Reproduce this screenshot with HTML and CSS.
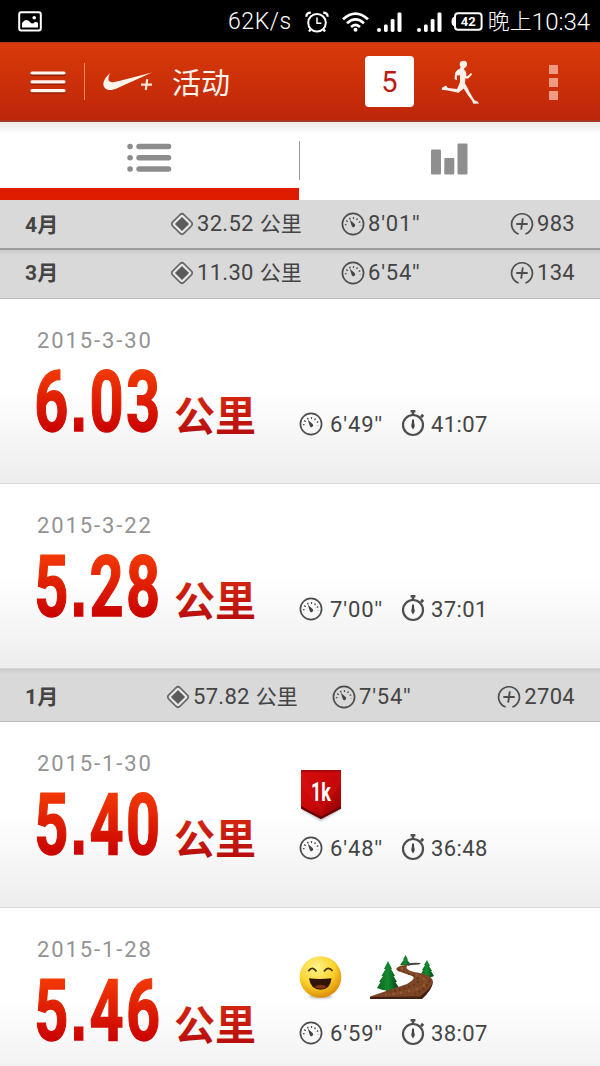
FILE: index.html
```html
<!DOCTYPE html>
<html lang="zh-CN">
<head>
    <meta charset="UTF-8">
    <meta name="viewport" content="width=device-width, initial-scale=1.0">
    <title>活动</title>
    <link rel="stylesheet" href="styles.css">
</head>
<body>
    <!-- shared icons -->
    <svg class="defs" width="0" height="0">
        <defs>
            <linearGradient id="redText" x1="0" y1="10" x2="0" y2="76" gradientUnits="userSpaceOnUse">
                <stop offset="0" stop-color="#f33b05"/>
                <stop offset="1" stop-color="#c90000"/>
            </linearGradient>
            <linearGradient id="redUnit" x1="0" y1="38" x2="0" y2="76" gradientUnits="userSpaceOnUse">
                <stop offset="0" stop-color="#d42610"/>
                <stop offset="1" stop-color="#b80d0d"/>
            </linearGradient>
        </defs>
        <symbol id="distance" viewBox="0 0 24 24">
            <rect x="4" y="4" width="16" height="16" rx="3" fill="#e8e8e8" stroke="#696969" stroke-width="1.7" transform="rotate(45 12 12)"/>
            <rect x="7" y="7" width="10" height="10" fill="#5b5b5b" transform="rotate(45 12 12)"/>
        </symbol>
        <symbol id="pace" viewBox="0 0 24 24">
            <circle cx="12" cy="12" r="10.6" fill="none" stroke="#4d4d4d" stroke-width="1.7"/>
            <path d="M4.7 13.3A7.3 7.3 0 1 1 19.3 13.3" fill="none" stroke="#4d4d4d" stroke-width="1.8" stroke-dasharray="1.3 2.45"/>
            <path d="M8.8 7.8L13.6 12A1.8 1.8 0 1 1 10.6 13.6Z" fill="#444"/>
        </symbol>
        <symbol id="fuel" viewBox="0 0 24 24">
            <path d="M8.6 22A10.4 10.4 0 1 1 15.4 22" fill="none" stroke="#4d4d4d" stroke-width="1.7"/>
            <path d="M12.8 6.3L11.2 17.7M6.3 12H17.7" fill="none" stroke="#4d4d4d" stroke-width="1.9"/>
        </symbol>
        <symbol id="time" viewBox="0 0 24 28">
            <circle cx="12" cy="16" r="10" fill="none" stroke="#4d4d4d" stroke-width="2.2"/>
            <path d="M9.6 1H14.4V3.6H13.2V6H10.8V3.6H9.6ZM19 7.3L21.1 4.8L23.2 6.8L21 9.3Z" fill="#4d4d4d"/>
            <path d="M11.1 10.5H12.9L13.3 15Q14.6 17 12 20.5Q9.4 17 10.7 15Z" fill="#444"/>
        </symbol>
        <symbol id="signal" viewBox="0 0 25 20">
            <circle cx="2" cy="18" r="2"/>
            <rect x="7" y="12.5" width="3.7" height="7.5" rx="1.4"/>
            <rect x="13.7" y="7" width="3.8" height="13" rx="1.4"/>
            <rect x="20.5" y="0.5" width="4" height="19.5" rx="1.4"/>
        </symbol>
    </svg>

    <div class="status-bar">
        <svg class="picture" width="24" height="21" viewBox="0 0 24 21">
            <rect x="1.2" y="1.2" width="21.6" height="18.4" rx="2" fill="none" stroke="#fff" stroke-width="2"/>
            <path d="M4 16.5V12Q8 6.5 12 11Q14 14 17 11Q19 10.5 20 12V16.5Z" fill="#fff"/>
            <circle cx="16.2" cy="6.8" r="1.8" fill="#fff"/>
        </svg>
        <span class="speed">62K/s</span>
        <svg class="alarm" width="24" height="22" viewBox="0 0 24 22">
            <g fill="none" stroke="#fff">
                <circle cx="12" cy="11.8" r="8.8" stroke-width="2"/>
                <path d="M12 6.5V12.3H16.4" stroke-width="1.5"/>
                <path d="M1.3 5.7Q1.5 1.7 5.8 1.7M18.2 1.7Q22.5 1.7 22.7 5.7M5.5 18.5L4 20.5M18.5 18.5L20 20.5" stroke-width="2.2"/>
            </g>
        </svg>
        <svg class="wifi" width="27" height="20" viewBox="0 0 27 20">
            <g fill="none" stroke="#fff" stroke-width="2.7">
                <path d="M1 7.2Q13.5 -4 26 7.2"/>
                <path d="M5 11.3Q13.5 3.6 22 11.3"/>
                <path d="M9 15Q13.5 10.8 18 15"/>
            </g>
            <circle cx="13.5" cy="17.8" r="2" fill="#fff"/>
        </svg>
        <svg class="signal" width="25" height="20"><use href="#signal"/></svg>
        <svg class="signal second" width="25" height="20"><use href="#signal"/></svg>
        <svg class="battery" width="32" height="19" viewBox="0 0 32 19">
            <rect x="4" y="1.2" width="26.6" height="16.5" rx="3" fill="none" stroke="#fff" stroke-width="2"/>
            <path d="M4 4.5Q.5 5 .5 9.5Q.5 14 4 14.5Z" fill="#fff"/>
            <text x="17.2" y="14.2" text-anchor="middle" class="battery-level">42</text>
        </svg>
        <span class="clock">晚上<span class="digits">10:34</span></span>
    </div>

    <header class="header">
        <svg class="menu" width="36" height="24" viewBox="0 0 36 24">
            <path d="M2 3.3H34M2 12.2H34M2 21H34" stroke="#8d1d06" stroke-width="3.2" stroke-linecap="round"/>
            <path d="M2 2H34M2 10.9H34M2 19.7H34" stroke="#fff4ef" stroke-width="3.2" stroke-linecap="round"/>
        </svg>
        <span class="divider"></span>
        <svg class="logo" width="50" height="20" viewBox="0 0 50 20">
            <path d="M7.2 1C4 7 5 11.2 11.2 10.1Q14 9.6 17 8.7L49 .6L13.5 16.6C6 19.8 0 17.7 .4 11.3Q.7 6.8 7.2 1Z" fill="#fff4ec"/>
            <path d="M44.2 7.2L42.8 18M38 12.7H49" stroke="#ffe4d8" stroke-width="2.2"/>
        </svg>
        <h1 class="title">活动</h1>
        <span class="count">5</span>
        <svg class="runner" width="40" height="45" viewBox="0 0 40 45">
            <path d="M19.5 1.8Q23.5 -.5 25.5 2Q26.8 4.7 25 7Q23 8.6 22.7 9.2Q26.5 12 25 15.5L26 16.4L30 13L31.2 14.2L27 18.8L24.4 18.2L24 23.5Q26.4 27 28.5 32L33.4 40.3Q37 41 38.2 43.4L32.2 43.7Q31.5 41.5 31 40.5Q27 36 22.7 28.5L17.5 32.8L5.8 30.3L.8 30L1 27.8L5 25.4L6.8 28L16 29Q18 25 19 22L19 15.2L15.8 15.4L16 20.2L13.5 19L14.2 12.7Q16 9.4 19 8.6L19.6 6.5Q17.7 4.5 19.5 1.8Z" fill="#fff0e9"/>
        </svg>
        <span class="more"><i></i><i></i><i></i></span>
    </header>

    <nav class="tabs">
        <div class="tab active">
            <svg width="45" height="30" viewBox="0 0 45 30" stroke="#8d8d8d" stroke-width="5.5" stroke-linecap="round">
                <path d="M3 3.5H3.1M3 14.8H3.1M3 26H3.1M12 3.5H41.5M12 14.8H41.5M12 26H41.5"/>
            </svg>
        </div>
        <div class="tab">
            <svg width="37" height="32" viewBox="0 0 37 32" fill="#8f8f8f">
                <rect x="0" y="6.5" width="10" height="25" rx="1"/>
                <rect x="13.3" y="15" width="10" height="16.5" rx="1"/>
                <rect x="26.5" y="0.5" width="10" height="31" rx="1"/>
            </svg>
        </div>
    </nav>

    <main>
        <div class="month first">
            <span class="name">4月</span>
            <span class="stat"><svg class="icon"><use href="#distance"/></svg>32.52<span class="km">公里</span></span>
            <span class="stat time"><svg class="icon"><use href="#pace"/></svg>8'01''</span>
            <span class="stat"><svg class="icon"><use href="#fuel"/></svg>983</span>
        </div>
        <div class="month">
            <span class="name">3月</span>
            <span class="stat"><svg class="icon"><use href="#distance"/></svg>11.30<span class="km">公里</span></span>
            <span class="stat time"><svg class="icon"><use href="#pace"/></svg>6'54''</span>
            <span class="stat"><svg class="icon"><use href="#fuel"/></svg>134</span>
        </div>

        <div class="run">
            <div class="summary">
                <div class="date">2015-3-30</div>
                <svg class="distance" width="230" height="90">
                    <text class="number" transform="scale(.7 1)" x="-4 48 75 127" y="73">6<tspan class="dot">.</tspan>03</text>
                    <text class="unit" x="137" y="73">公里</text>
                </svg>
            </div>
            <div class="details">
                <div class="stats">
                    <svg class="icon"><use href="#pace"/></svg><span class="pace">6'49''</span>
                    <svg class="icon watch"><use href="#time"/></svg><span>41:07</span>
                </div>
            </div>
        </div>
        <div class="run">
            <div class="summary">
                <div class="date">2015-3-22</div>
                <svg class="distance" width="230" height="90">
                    <text class="number" transform="scale(.7 1)" x="-4 48 75 127" y="73">5<tspan class="dot">.</tspan>28</text>
                    <text class="unit" x="137" y="73">公里</text>
                </svg>
            </div>
            <div class="details">
                <div class="stats">
                    <svg class="icon"><use href="#pace"/></svg><span class="pace">7'00''</span>
                    <svg class="icon watch"><use href="#time"/></svg><span>37:01</span>
                </div>
            </div>
        </div>

        <div class="month wide">
            <span class="name">1月</span>
            <span class="stat"><svg class="icon"><use href="#distance"/></svg>57.82<span class="km">公里</span></span>
            <span class="stat time"><svg class="icon"><use href="#pace"/></svg>7'54''</span>
            <span class="stat"><svg class="icon"><use href="#fuel"/></svg>2704</span>
        </div>

        <div class="run">
            <div class="summary">
                <div class="date">2015-1-30</div>
                <svg class="distance" width="230" height="90">
                    <text class="number" transform="scale(.7 1)" x="-4 48 75 127" y="73">5<tspan class="dot">.</tspan>40</text>
                    <text class="unit" x="137" y="73">公里</text>
                </svg>
            </div>
            <div class="details">
                <div class="badges">
                    <svg width="44" height="54" viewBox="0 0 44 54">
                        <defs>
                            <linearGradient id="ribbon" x1="0" y1="0" x2="1" y2="1">
                                <stop offset="0" stop-color="#d80d0d"/>
                                <stop offset=".5" stop-color="#c70708"/>
                                <stop offset="1" stop-color="#8f0205"/>
                            </linearGradient>
                        </defs>
                        <path class="soft" d="M3 6H41V42L22 53L3 42Z" fill="#0004"/>
                        <path d="M2 2H42V40.5L22 51L2 40.5Z" fill="url(#ribbon)"/>
                        <path d="M2 38L22 48.5L42 38V40.5L22 51L2 40.5Z" fill="#650003"/>
                        <path d="M2 2H42V4H2Z" fill="#a8090b"/>
                        <path d="M2 4L22 37L42 4V15L22 45L2 15Z" fill="#f02020" opacity=".16"/>
                        <text class="badge-text" transform="scale(.72 1)" x="30.5" y="33" text-anchor="middle">1k</text>
                    </svg>
                </div>
                <div class="stats">
                    <svg class="icon"><use href="#pace"/></svg><span class="pace">6'48''</span>
                    <svg class="icon watch"><use href="#time"/></svg><span>36:48</span>
                </div>
            </div>
        </div>
        <div class="run">
            <div class="summary">
                <div class="date">2015-1-28</div>
                <svg class="distance" width="230" height="90">
                    <text class="number" transform="scale(.7 1)" x="-4 48 75 127" y="73">5<tspan class="dot">.</tspan>46</text>
                    <text class="unit" x="137" y="73">公里</text>
                </svg>
            </div>
            <div class="details">
                <div class="badges emoji">
                    <svg width="44" height="46" viewBox="0 0 44 46">
                        <defs>
                            <radialGradient id="face" cx=".4" cy=".28" r=".72">
                                <stop offset="0" stop-color="#fff58d"/>
                                <stop offset=".6" stop-color="#fbd22b"/>
                                <stop offset="1" stop-color="#dc8d08"/>
                            </radialGradient>
                        </defs>
                        <ellipse class="soft" cx="21.5" cy="41.5" rx="12" ry="2" fill="#0004"/>
                        <circle cx="21.5" cy="22" r="20.8" fill="url(#face)"/>
                        <path d="M9.3 16.3Q13.5 10.5 17.5 16.5M25 16.5Q29 10.5 33.5 16" fill="none" stroke="#493006" stroke-width="1.8"/>
                        <path d="M10 23.3Q21 24.5 32.5 23.2Q31.5 34.5 21.5 34.7Q11.5 34.5 10 23.3Z" fill="#2f1604"/>
                        <path d="M15 32Q21.5 27.5 28 32Q22 35.5 15 32Z" fill="#823610"/>
                    </svg>
                    <svg class="trail" width="66" height="46" viewBox="0 0 66 46">
                        <defs>
                            <linearGradient id="tree" x1="0" x2="1">
                                <stop offset="0" stop-color="#0c641d"/>
                                <stop offset=".5" stop-color="#158a31"/>
                                <stop offset="1" stop-color="#05400f"/>
                            </linearGradient>
                        </defs>
                        <path d="M16 32H20V36H16ZM55 18H58V22H55Z" fill="#51300f"/>
                        <path d="M18 6L22 14H21L25 21H23.5L27 27H25.5L29 33Q18 38 7 33L10.5 27H9L13 21H11.5L15.5 14H14Z" fill="url(#tree)"/>
                        <path d="M35.5 0L38 4.5H37L41 10H30L34 4.5H33Z" fill="url(#tree)"/>
                        <path d="M57 5L60 11H59L62 16H61L64 21Q57 25 50 21L53 15H52L55 10H54Z" fill="url(#tree)"/>
                        <path d="M37 9Q43 7 51 8L49 9.5Q42 9.5 38 11Z" fill="#46454b"/>
                        <path d="M26 14Q29 9.5 38 10Q33 14 44 17Q63 20 63 27Q62 34 52 43.5H0V41.5L37 29Q47 23 42 21L28 16Z" fill="#7c4526"/>
                        <path d="M0 42L50 41.5Q61 33 63 27Q62 35 52 44H0Z" fill="#432010"/>
                        <path d="M31 13Q36 17 45 20Q55 22 56 28Q51 36 15 40" fill="none" stroke="#95572f" stroke-width="2.4" stroke-dasharray="3 2 1 2"/>
                        <path d="M28 15Q48 21 49 25Q47 31 20 37M60 25Q56 34 45 39" fill="none" stroke="#603018" stroke-width="1.6" stroke-dasharray="2 3"/>
                    </svg>
                </div>
                <div class="stats">
                    <svg class="icon"><use href="#pace"/></svg><span class="pace">6'59''</span>
                    <svg class="icon watch"><use href="#time"/></svg><span>38:07</span>
                </div>
            </div>
        </div>
    </main>
</body>
</html>
```
FILE: styles.css
```css
* {
    box-sizing: border-box;
}
body {
    margin: 0;
    width: 600px;
    height: 1066px;
    overflow: hidden;
    background-color: #fff;
    color: #444;
    font-family: Roboto, "Noto Sans CJK SC", sans-serif;
}
svg {
    display: block;
    flex-shrink: 0;
}
.defs {
    position: absolute;
}
.soft {
    filter: blur(1px);
}

/* status bar */
.status-bar {
    display: flex;
    align-items: center;
    height: 42px;
    padding: 1px 11px 0 18px;
    background-color: #000;
    color: #fff;
    fill: #fff;
    white-space: nowrap;
}
.speed {
    width: 64px;
    margin-left: 186px;
    font-size: 23px;
    font-weight: 300;
    letter-spacing: 0.6px;
}
.alarm {
    margin-left: 13px;
}
.wifi {
    margin-left: 13px;
}
.signal {
    margin-left: 8px;
}
.second {
    margin-left: 15px;
}
.battery {
    margin-left: 9px;
}
.battery-level {
    font-size: 13px;
    font-weight: 700;
}
.clock {
    display: flex;
    align-items: center;
    margin-left: 5px;
    font-size: 22px;
    font-weight: 300;
    line-height: 30px;
}
.digits {
    font-size: 24px;
}

/* header */
.header {
    display: flex;
    align-items: center;
    height: 80px;
    padding: 0 42px 0 30px;
    background: linear-gradient(#d93a08, #be260a);
    border-top: 1px solid #a33d22;
    border-bottom: 2px solid #a63925;
}
.menu {
    margin-top: 2px;
}
.divider {
    width: 1px;
    height: 37px;
    margin-left: 18px;
    background-color: #ef8763;
}
.logo {
    margin-left: 18px;
}
.title {
    width: 60px;
    margin: 4px 0 0 19px;
    color: #fff4ee;
    font-size: 29px;
    font-weight: 400;
    line-height: 40px;
}
.count {
    width: 49px;
    height: 51px;
    margin-left: 133px;
    border-radius: 4px;
    background-color: #fff;
    color: #bb1a16;
    font-size: 29px;
    line-height: 53px;
    text-align: center;
}
.runner {
    margin-left: 27px;
    margin-top: 2px;
}
.more {
    display: flex;
    flex-direction: column;
    gap: 4px;
    margin-left: auto;
    margin-top: 1px;
}
.more i {
    width: 9px;
    height: 9px;
    background-color: #f09a84;
}

/* tabs */
.tabs {
    display: flex;
    height: 78px;
    background: linear-gradient(#ece9e7, #fff 12px);
}
.tab {
    display: flex;
    justify-content: center;
    width: 300px;
    padding-top: 21px;
}
.tab.active {
    width: 299px;
    border-bottom: 12px solid #df1b00;
}
.tab + .tab {
    background: linear-gradient(#999, #999) 0 19px / 1px 39px no-repeat;
}

/* month rows */
.month {
    display: grid;
    grid-template-columns: 145px 171px 1fr auto;
    align-items: center;
    height: 49px;
    padding: 0 25px 3px;
    background: linear-gradient(#cacaca, #d9d9d9 5px);
    border-bottom: 1px solid #bcbcbc;
    font-size: 22px;
    letter-spacing: 0.3px;
}
.month.first {
    height: 50px;
    padding-bottom: 0;
    background: #d9d9d9;
    border-bottom: 2px solid #9c9c9c;
}
.month.wide {
    grid-template-columns: 141px 166px 1fr auto;
    height: 53px;
    padding: 3px 25px 0;
}
.name {
    margin-top: -3px;
    font-size: 21px;
    font-weight: 700;
}
.stat {
    display: flex;
    align-items: center;
    line-height: 30px;
}
.time {
    letter-spacing: 0.8px;
}
.km {
    margin-left: 6px;
    font-size: 21px;
    letter-spacing: 0;
}
.icon {
    width: 24px;
    height: 24px;
    margin-right: 3px;
}

/* run rows */
.run {
    display: flex;
    height: 185px;
    padding-left: 37px;
    background: linear-gradient(#fff 50%, #ededed);
    border-bottom: 1px solid #d5d5d5;
}
.wide + .run {
    height: 186px;
}
.summary {
    width: 262px;
    padding-top: 29px;
}
.date {
    color: #939393;
    font-size: 22px;
    line-height: 26px;
    letter-spacing: 1.9px;
}
.distance {
    margin-top: 4px;
    overflow: visible;
}
.number {
    fill: url(#redText);
    stroke: url(#redText);
    stroke-width: 1.4;
    font-size: 85px;
    font-weight: 700;
}
.dot {
    font-family: "Liberation Sans", sans-serif;
}
.unit {
    fill: url(#redUnit);
    font-family: "Noto Sans CJK SC", sans-serif;
    font-size: 41px;
    font-weight: 700;
}
.details {
    display: flex;
    flex-direction: column;
    justify-content: flex-end;
    padding-bottom: 44px;
}
.badges {
    display: flex;
    align-items: flex-end;
    height: 58px;
    margin-bottom: 11px;
}
.emoji {
    margin-bottom: 17px;
}
.trail {
    margin-left: 27px;
}
.badge-text {
    fill: #fff;
    font-size: 25px;
    font-weight: 700;
}
.stats {
    display: flex;
    align-items: center;
    height: 30px;
    font-size: 22px;
    letter-spacing: 0.4px;
}
.pace {
    width: 67px;
    letter-spacing: 0.9px;
}
.stats .icon {
    margin-right: 7px;
}
.stats .watch {
    height: 28px;
    margin-right: 6px;
    margin-left: 4px;
    margin-bottom: 2px;
}
```
